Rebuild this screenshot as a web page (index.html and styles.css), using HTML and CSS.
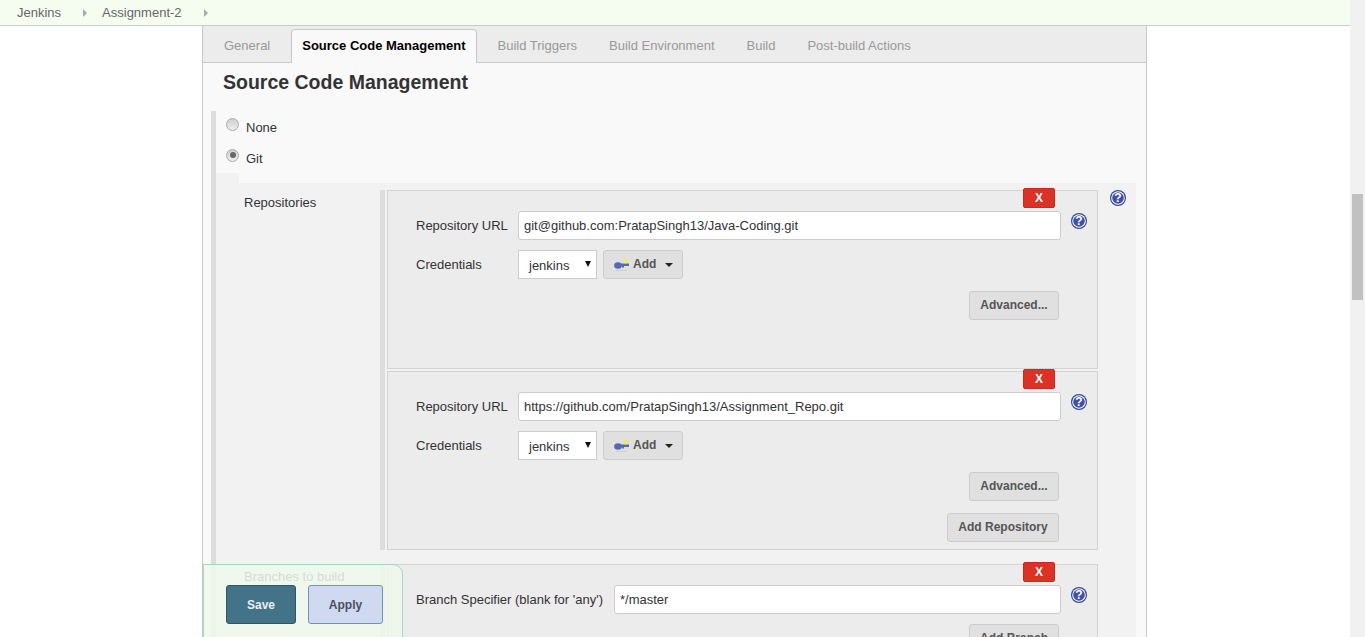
FILE: index.html
```html
<!doctype html>
<html lang="en">

<head>
    <meta charset="utf-8">
    <title>Assignment-2 Config</title>
    <link rel="stylesheet" href="styles.css">
</head>

<body>

    <div class="page">
        <nav class="breadcrumbs">
            <a href="#">Jenkins</a>
            <span class="crumb-arrow"></span>
            <a href="#">Assignment-2</a>
            <span class="crumb-arrow"></span>
        </nav>

        <main class="config">
            <ul class="tabs">
                <li>General</li>
                <li class="active">Source Code Management</li>
                <li>Build Triggers</li>
                <li>Build Environment</li>
                <li>Build</li>
                <li>Post-build Actions</li>
            </ul>

            <h2 class="section-title">Source Code Management</h2>

            <div class="scm">
                <label class="radio-row"><span class="radio"></span>None</label>
                <label class="radio-row"><span class="radio checked"></span>Git</label>
                <div class="notch"></div>

                <div class="git-block">
                    <div class="field-group">
                        <div class="group-label">Repositories</div>
                        <div class="group-bar"></div>
                        <div class="boxes">
                            <div class="box">
                                <button class="btn-x">X</button>
                                <div class="row">
                                    <span class="label">Repository URL</span>
                                    <input class="text-input" value="git@github.com:PratapSingh13/Java-Coding.git">
                                    <svg class="help" viewBox="0 0 16 16"><circle cx="8" cy="8" r="8" fill="#34459a"/><circle cx="8" cy="8" r="6.800" fill="#fff"/><circle cx="8" cy="8" r="5.800" fill="#3f51a6"/><text x="8" y="12.300" text-anchor="middle">?</text></svg>
                                </div>
                                <div class="row">
                                    <span class="label">Credentials</span>
                                    <div class="select">jenkins<span class="select-arrow"></span></div>
                                    <button class="btn btn-add">
                                        <svg class="key" viewBox="0 0 16 12"><ellipse cx="4" cy="6.500" rx="3.800" ry="3.300" fill="#5468b4"/><rect x="6" y="4.500" width="9" height="2.500" fill="#5468b4"/><rect x="8" y="7" width="2" height="1.500" fill="#5468b4"/><circle cx="11.500" cy="2.200" r="2.200" fill="#f4ea55"/><rect x="2" y="10.800" width="11" height="1" fill="#ccc"/></svg>
                                        Add<span class="caret"></span>
                                    </button>
                                </div>
                                <div class="actions">
                                    <button class="btn btn-wide">Advanced...</button>
                                </div>
                            </div>

                            <div class="box">
                                <button class="btn-x">X</button>
                                <div class="row">
                                    <span class="label">Repository URL</span>
                                    <input class="text-input" value="https://github.com/PratapSingh13/Assignment_Repo.git">
                                    <svg class="help" viewBox="0 0 16 16"><circle cx="8" cy="8" r="8" fill="#34459a"/><circle cx="8" cy="8" r="6.800" fill="#fff"/><circle cx="8" cy="8" r="5.800" fill="#3f51a6"/><text x="8" y="12.300" text-anchor="middle">?</text></svg>
                                </div>
                                <div class="row">
                                    <span class="label">Credentials</span>
                                    <div class="select">jenkins<span class="select-arrow"></span></div>
                                    <button class="btn btn-add">
                                        <svg class="key" viewBox="0 0 16 12"><ellipse cx="4" cy="6.500" rx="3.800" ry="3.300" fill="#5468b4"/><rect x="6" y="4.500" width="9" height="2.500" fill="#5468b4"/><rect x="8" y="7" width="2" height="1.500" fill="#5468b4"/><circle cx="11.500" cy="2.200" r="2.200" fill="#f4ea55"/><rect x="2" y="10.800" width="11" height="1" fill="#ccc"/></svg>
                                        Add<span class="caret"></span>
                                    </button>
                                </div>
                                <div class="actions">
                                    <button class="btn btn-wide">Advanced...</button>
                                </div>
                                <div class="actions">
                                    <button class="btn btn-repo">Add Repository</button>
                                </div>
                            </div>
                        </div>
                        <svg class="help help-outer" viewBox="0 0 16 16"><circle cx="8" cy="8" r="8" fill="#34459a"/><circle cx="8" cy="8" r="6.800" fill="#fff"/><circle cx="8" cy="8" r="5.800" fill="#3f51a6"/><text x="8" y="12.300" text-anchor="middle">?</text></svg>
                    </div>

                    <div class="field-group branches">
                        <div class="group-label">Branches to build</div>
                        <div class="group-bar"></div>
                        <div class="boxes">
                            <div class="box box-open">
                                <button class="btn-x">X</button>
                                <div class="row">
                                    <span class="label label-wide">Branch Specifier (blank for 'any')</span>
                                    <input class="text-input" value="*/master">
                                    <svg class="help" viewBox="0 0 16 16"><circle cx="8" cy="8" r="8" fill="#34459a"/><circle cx="8" cy="8" r="6.800" fill="#fff"/><circle cx="8" cy="8" r="5.800" fill="#3f51a6"/><text x="8" y="12.300" text-anchor="middle">?</text></svg>
                                </div>
                                <div class="actions">
                                    <button class="btn btn-wide">Add Branch</button>
                                </div>
                            </div>
                        </div>
                    </div>
                </div>
            </div>
        </main>

        <div class="save-bar">
            <button class="btn-save">Save</button>
            <button class="btn-apply">Apply</button>
        </div>
    </div>

    <div class="scrollbar">
        <div class="scroll-thumb"></div>
    </div>

</body>

</html>
```

FILE: styles.css
```css
* {
    box-sizing: border-box;
}

body {
    font-family: "Liberation Sans", Arial, Helvetica, sans-serif;
    font-size: 13px;
    color: #333;
    margin: 0;
    padding: 0;
    height: 637px;
    overflow: hidden;
    display: flex;
    background-color: #fff;
}

.page {
    flex: 1;
    position: relative;
    height: 637px;
    overflow: hidden;
}

/* top bar */
.breadcrumbs {
    display: flex;
    align-items: center;
    height: 26px;
    padding-left: 17px;
    background: #f5fdf1;
    border-bottom: 1px solid #c8cdc6;
}

.breadcrumbs a {
    color: #666;
    text-decoration: none;
}

.crumb-arrow {
    width: 0;
    height: 0;
    margin: 0 15px 0 22px;
    border-left: 4px solid #aaa;
    border-top: 4px solid transparent;
    border-bottom: 4px solid transparent;
}

/* main column */
.config {
    width: 945px;
    height: 611px;
    margin-left: 202px;
    background: #f9f9f9;
    border-left: 1px solid #c8c8c8;
    border-right: 1px solid #c8c8c8;
}

.tabs {
    display: flex;
    list-style: none;
    margin: 0;
    padding: 3px 0 0 10px;
    height: 37px;
    background: #ececec;
    border-bottom: 1px solid #c8c8c8;
}

.tabs li {
    height: 34px;
    line-height: 33px;
    padding: 0 11px;
    margin-right: 10px;
    color: #999;
    white-space: nowrap;
}

.tabs .active {
    color: #000;
    font-weight: bold;
    background: #f9f9f9;
    border: 1px solid #c8c8c8;
    border-bottom: 0;
    border-radius: 4px 4px 0 0;
    padding: 0 10px;
    line-height: 31px;
}

.section-title {
    font-size: 19.5px;
    line-height: 24px;
    margin: 0;
    padding: 7px 0 0 20px;
    height: 48px;
    color: #333;
}

/* radio part */
.scm {
    margin-left: 8px;
    border-left: 5px solid #ddd;
    height: 530px;
}

.radio-row {
    display: flex;
    align-items: center;
    height: 31px;
    padding: 2px 0 0 10px;
}

.radio {
    width: 13px;
    height: 13px;
    margin: -7px 7px 0 0;
    border-radius: 50%;
    background: linear-gradient(#cfcfcf, #eee);
    border: 1px solid #aaa;
    display: flex;
    align-items: center;
    justify-content: center;
}

.checked::after {
    content: "";
    width: 6px;
    height: 6px;
    border-radius: 50%;
    background: #666;
}

.notch {
    width: 23px;
    height: 10px;
    margin-top: 0;
    background: #f2f2f2;
}

.git-block {
    width: 920px;
    height: 460px;
    background: #f2f2f2;
    padding-top: 7px;
}

.field-group {
    display: flex;
    padding-bottom: 14px;
}

.group-label {
    width: 164px;
    padding: 5px 0 0 28px;
    line-height: 15px;
}

.group-bar {
    width: 5px;
    margin-right: 2px;
    background: #ddd;
}

.boxes {
    width: 711px;
    display: flex;
    flex-direction: column;
    gap: 2px;
}

.box {
    position: relative;
    height: 179px;
    padding: 20px 0 0 28px;
    background: #ececec;
    border: 1px solid #d3d3d3;
}

.box-open {
    height: 100px;
    border-bottom: 0;
}

.row {
    display: flex;
    align-items: center;
    height: 29px;
    margin-bottom: 10px;
}

.label {
    width: 102px;
    flex-shrink: 0;
}

.label-wide {
    width: 198px;
}

.text-input {
    flex: 1;
    min-width: 0;
    height: 29px;
    padding: 0 5px;
    font: 13px "Liberation Sans", Arial, sans-serif;
    color: #333;
    background: #fff;
    border: 1px solid #ccc;
    border-radius: 3px;
}

.select {
    position: relative;
    width: 79px;
    height: 29px;
    line-height: 30px;
    padding-left: 10px;
    background: #fff;
    border: 1px solid #ccc;
}

.select-arrow {
    position: absolute;
    top: 10px;
    right: 5px;
    width: 0;
    height: 0;
    border-top: 6px solid #111;
    border-left: 3px solid transparent;
    border-right: 3px solid transparent;
}

.help {
    width: 16px;
    height: 16px;
    margin: -10px 10px 0 10px;
    flex-shrink: 0;
}

.help text {
    font: bold 12px "Liberation Sans", Arial, sans-serif;
    fill: #fff;
}

.help-outer {
    margin: 0 0 0 12px;
}

/* buttons */
.btn {
    height: 29px;
    padding: 0 10px 2px;
    font: bold 12px "Liberation Sans", Arial, sans-serif;
    color: #555;
    background: #e0e0e0;
    border: 1px solid #ccc;
    border-radius: 3px;
}

.btn-wide {
    width: 90px;
    padding: 0 0 2px;
}

.btn-repo {
    width: 112px;
    padding: 0 0 2px;
}

.btn-add {
    display: flex;
    align-items: center;
    width: 80px;
    margin-left: 6px;
    padding: 0 0 2px 10px;
}

.key {
    width: 16px;
    height: 12px;
    margin: 3px 3px 0 0;
}

.caret {
    width: 0;
    height: 0;
    margin: 2px 0 0 9px;
    border-top: 4px solid #222;
    border-left: 4px solid transparent;
    border-right: 4px solid transparent;
}

.actions {
    display: flex;
    justify-content: flex-end;
    margin-bottom: 12px;
    padding-right: 38px;
}

.row + .actions {
    margin-top: 12px;
}

.box-open .row + .actions {
    margin-top: 10px;
}

.btn-x {
    position: absolute;
    top: -3px;
    right: 42px;
    width: 32px;
    height: 20px;
    padding: 0;
    font: bold 12px "Liberation Sans", Arial, sans-serif;
    color: #fff;
    background: #dc3125;
    border: 1px solid #c9291e;
    border-radius: 2px;
}

/* sticky save bar */
.save-bar {
    position: absolute;
    left: 203px;
    top: 564px;
    display: flex;
    gap: 12px;
    width: 200px;
    height: 80px;
    padding: 20px 0 0 22px;
    background: rgba(240, 248, 236, 0.85);
    border: 1px solid #a6d8bc;
    border-radius: 0 10px 0 0;
}

.btn-save,
.btn-apply {
    height: 39px;
    padding: 0;
    font: bold 12px "Liberation Sans", Arial, sans-serif;
    border-radius: 3px;
}

.btn-save {
    width: 70px;
    color: #eee;
    background: #427389;
    border: 1px solid #2f5566;
}

.btn-apply {
    width: 75px;
    color: #4a4f63;
    background: #cfdaf0;
    border: 1px solid #6f8fc8;
}

/* scrollbar */
.scrollbar {
    width: 15px;
    height: 637px;
    padding: 194px 2px 0 2px;
    background: #f1f1f1;
}

.scroll-thumb {
    height: 106px;
    background: #c1c1c1;
}
```
